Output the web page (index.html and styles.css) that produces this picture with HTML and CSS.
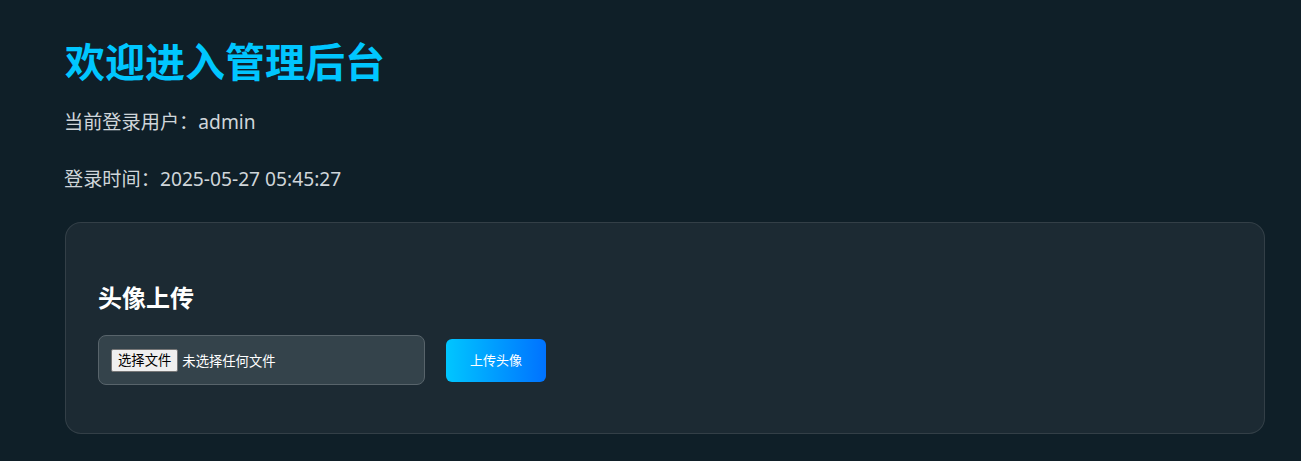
FILE: index.html
```html
<!DOCTYPE html>
<html lang="zh-CN">
<head>
    <meta charset="UTF-8">
    <meta name="viewport" content="width=device-width, initial-scale=1.0">
    <title>管理后台</title>
    <link rel="stylesheet" href="styles.css">
</head>
<body>
    <div class="container">
        <h1>欢迎进入管理后台</h1>
        <p class="info">当前登录用户：admin</p>
        <p class="info">登录时间：2025-05-27 05:45:27</p>

        <div class="card">
            <h3>头像上传</h3>
            <form class="upload-form">
                <div class="file-box">
                    <input type="file" id="avatar" class="file-hidden">
                    <label for="avatar" class="file-btn">选择文件</label>
                    <span class="file-name">未选择任何文件</span>
                </div>
                <button type="button" class="upload-btn">上传头像</button>
            </form>
        </div>
    </div>
</body>
</html>
```

FILE: styles.css
```css
body {
    margin: 0;
    background-color: #0f1f28;
    font-family: "Noto Sans", "Noto Sans CJK SC", sans-serif;
    color: #d0d6da;
}
.container {
    padding: 38px 36px 0 65px;
}
h1 {
    margin: 0 0 22px;
    font-size: 40px;
    line-height: 48px;
    color: #00c6ff;
    font-weight: 700;
}
.info {
    margin: 0 0 30px;
    font-size: 19.2px;
    line-height: 27px;
    margin-left: -1px;
}
.card {
    margin-top: 0;
    padding: 60px 32px 48px;
    background-color: #1c2a33;
    border: 1px solid rgba(255, 255, 255, 0.1);
    border-radius: 16px;
}
.card h3 {
    margin: 0 0 23px;
    font-size: 24px;
    line-height: 29px;
    color: #fff;
}
.upload-form {
    display: flex;
    align-items: center;
    gap: 21px;
}
.file-box {
    display: flex;
    align-items: center;
    width: 301px;
    height: 24px;
    padding: 12px;
    background-color: #34434b;
    border: 1px solid #58646b;
    border-radius: 8px;
    font-size: 13.33px;
}
.file-hidden {
    display: none;
}
.file-btn {
    padding: 1px 6px;
    line-height: 19px;
    background-color: #efefef;
    border: 1px solid #767676;
    border-radius: 2px;
    color: #000;
    cursor: pointer;
}
.file-name {
    margin-left: 4px;
    color: #fff;
}
.upload-btn {
    padding: 12px 24px;
    font-family: inherit;
    font-size: 13px;
    line-height: 19px;
    color: #fff;
    background: linear-gradient(90deg, #00c6ff, #0072ff);
    border: none;
    border-radius: 6px;
    cursor: pointer;
}
```
